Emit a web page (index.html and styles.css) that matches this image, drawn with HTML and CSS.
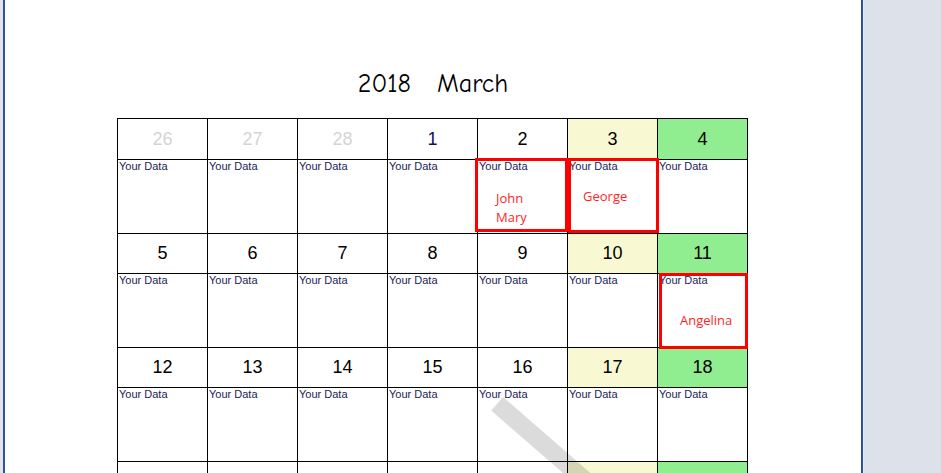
FILE: index.html
```html
<!DOCTYPE html>
<html lang="en">
<head>
    <meta charset="UTF-8">
    <title>2018 March</title>
    <link rel="stylesheet" href="styles.css">
</head>
<body>
    <div class="desk">
        <div class="edge"></div>
        <div class="page">
            <h1 class="title"><span>2018</span><span>March</span></h1>
            <table class="cal">
                <tr class="days top">
                    <td class="prev">26</td><td class="prev">27</td><td class="prev">28</td>
                    <td class="first">1</td><td>2</td><td class="sat">3</td><td class="sun">4</td>
                </tr>
                <tr class="data">
                    <td><div class="note">Your Data</div></td>
                    <td><div class="note">Your Data</div></td>
                    <td><div class="note">Your Data</div></td>
                    <td><div class="note">Your Data</div></td>
                    <td class="marked">
                        <div class="note">Your Data</div>
                        <div class="name name-john">John<br>Mary</div>
                        <div class="mark mark-john"></div>
                    </td>
                    <td class="marked">
                        <div class="note">Your Data</div>
                        <div class="name name-george">George</div>
                        <div class="mark mark-george"></div>
                    </td>
                    <td><div class="note">Your Data</div></td>
                </tr>
                <tr class="days">
                    <td>5</td><td>6</td><td>7</td><td>8</td><td>9</td><td class="sat">10</td><td class="sun">11</td>
                </tr>
                <tr class="data">
                    <td><div class="note">Your Data</div></td>
                    <td><div class="note">Your Data</div></td>
                    <td><div class="note">Your Data</div></td>
                    <td><div class="note">Your Data</div></td>
                    <td><div class="note">Your Data</div></td>
                    <td><div class="note">Your Data</div></td>
                    <td class="marked">
                        <div class="note">Your Data</div>
                        <div class="name name-angelina">Angelina</div>
                        <div class="mark mark-angelina"></div>
                    </td>
                </tr>
                <tr class="days">
                    <td>12</td><td>13</td><td>14</td><td>15</td><td>16</td><td class="sat">17</td><td class="sun">18</td>
                </tr>
                <tr class="data">
                    <td><div class="note">Your Data</div></td>
                    <td><div class="note">Your Data</div></td>
                    <td><div class="note">Your Data</div></td>
                    <td><div class="note">Your Data</div></td>
                    <td><div class="note">Your Data</div></td>
                    <td><div class="note">Your Data</div></td>
                    <td><div class="note">Your Data</div></td>
                </tr>
                <tr class="days">
                    <td>19</td><td>20</td><td>21</td><td>22</td><td>23</td><td class="sat">24</td><td class="sun">25</td>
                </tr>
                <tr class="data">
                    <td><div class="note">Your Data</div></td>
                    <td><div class="note">Your Data</div></td>
                    <td><div class="note">Your Data</div></td>
                    <td><div class="note">Your Data</div></td>
                    <td><div class="note">Your Data</div></td>
                    <td><div class="note">Your Data</div></td>
                    <td><div class="note">Your Data</div></td>
                </tr>
            </table>
            <div class="watermark"></div>
        </div>
        <div class="side"></div>
    </div>
</body>
</html>
```

FILE: styles.css
```css
html, body {
    margin: 0;
    height: 100%;
    overflow: hidden;
}
body {
    font-family: "Liberation Sans", Arial, sans-serif;
    background-color: #ffffff;
}
.desk {
    display: flex;
    height: 100%;
}
.edge {
    width: 3px;
    background-color: #e1e4eb;
}
.page {
    position: relative;
    width: 860px;
    box-sizing: border-box;
    border-left: 2px solid #2f5597;
    border-right: 2px solid #2f5597;
    background-color: #ffffff;
    overflow: hidden;
}
.side {
    flex: 1;
    background-color: #dde1ea;
    border-left: 1px solid #e6e9f0;
}
.title {
    display: flex;
    justify-content: center;
    gap: 26px;
    margin: 70px 0 20px 0;
    font-family: "Comic Sans MS", "Comic Neue", "Liberation Sans", sans-serif;
    font-size: 26px;
    font-weight: normal;
    line-height: 28px;
    color: #000;
}
.cal {
    border-collapse: collapse;
    table-layout: fixed;
    margin: 0 0 0 112px;
}
.cal td {
    width: 89px;
    border: 1px solid #000;
    padding: 0;
}
.days td {
    height: 39px;
    text-align: center;
    vertical-align: middle;
    font-size: 18px;
    color: #000;
}
.days.top td {
    height: 40px;
}
.days td.prev {
    color: #d4d4d4;
}
.days td.first {
    color: #10105a;
}
.days td.sat {
    background-color: #f8f8d2;
}
.days td.sun {
    background-color: #90ee90;
}
.data td {
    height: 73px;
    vertical-align: top;
}
.note {
    padding-left: 1px;
    font-size: 11px;
    line-height: 12px;
    color: #1c1c58;
}
.marked {
    position: relative;
}
.name {
    font-family: "Open Sans", "Noto Sans", sans-serif;
    font-size: 13px;
    line-height: 19px;
    color: #ff1f1f;
}
.name-john {
    margin-top: 17px;
    padding-left: 18px;
}
.name-george {
    margin-top: 15px;
    padding-left: 15px;
}
.name-angelina {
    margin-top: 25px;
    padding-left: 22px;
}
.mark {
    position: absolute;
    border: 3px solid #ff0000;
}
.mark-john {
    top: -2px;
    left: -3px;
    right: -1px;
    bottom: 1px;
}
.mark-george {
    top: -2px;
    left: 0;
    right: -2px;
    bottom: 0;
}
.mark-angelina {
    top: -1px;
    left: 1px;
    right: -1px;
    bottom: -2px;
}
.watermark {
    position: absolute;
    left: 498px;
    top: 397px;
    width: 200px;
    height: 18px;
    background-color: rgba(0, 0, 0, 0.14);
    transform: rotate(41deg);
    transform-origin: left top;
}
```
